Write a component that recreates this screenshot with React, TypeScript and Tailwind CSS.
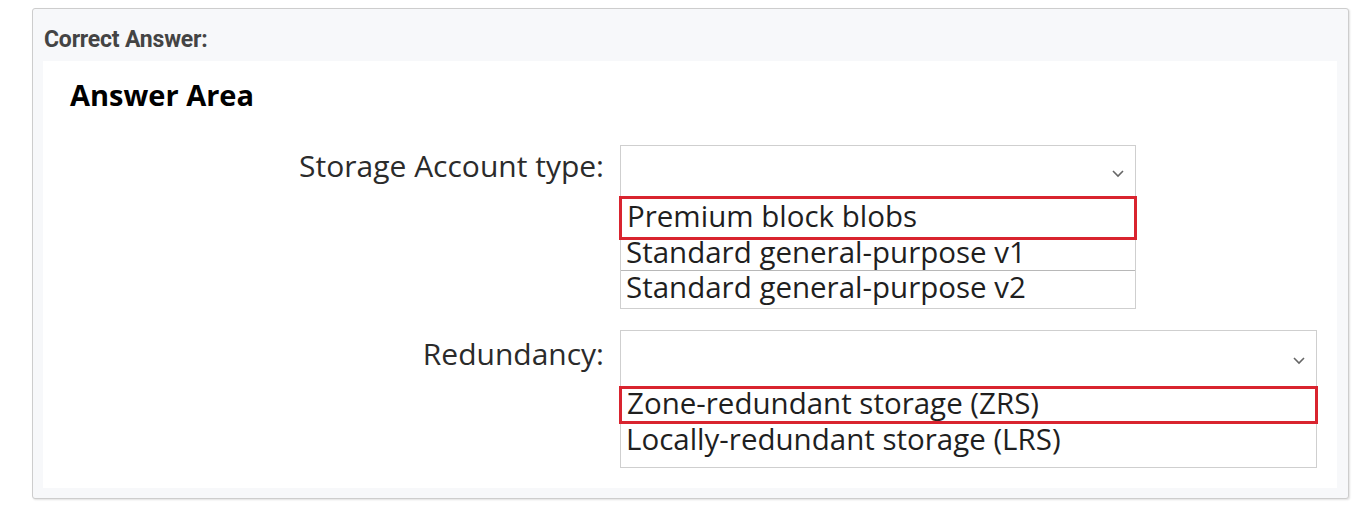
function Chevron() {
  return (
    <svg width="14" height="9" viewBox="0 0 14 9" className="text-[#666]">
      <path d="M2 2 L7 7 L12 2" fill="none" stroke="currentColor" strokeWidth="1.6" />
    </svg>
  );
}

type Option = { text: string; row: string; nudge: string; marked?: boolean; divider?: boolean };

function Dropdown({ width, headerH, options }: { width: string; headerH: string; options: Option[] }) {
  return (
    <div className={`${width} border border-[#cfcfcf] bg-white`}>
      <div className={`${headerH} flex items-center justify-end pr-[10px] pt-[4px]`}>
        <Chevron />
      </div>
      {options.map((o) => (
        <div
          key={o.text}
          className={`${o.row} flow-root pl-[5px] text-[29.5px] leading-none text-[#1f1f1f] ${
            o.marked ? "-mx-[2px] border-[3px] border-[#d9242f]" : ""
          } ${o.divider ? "border-t border-[#b8b8b8]" : ""}`}
        >
          <span className={`block whitespace-nowrap ${o.nudge}`}>{o.text}</span>
        </div>
      ))}
    </div>
  );
}

export default function App() {
  return (
    <div className="bg-white w-[1369px] h-[531px] pl-[32px] pt-[8px]" style={{ fontFamily: "'Open Sans', 'Noto Sans', sans-serif" }}>
      <div className="w-[1317px] h-[491px] rounded-[3px] border border-[#cdcdcd] bg-[#f7f8fa] shadow-[1px_1px_2px_rgba(0,0,0,0.12)] pl-[10px] pr-[11px] flex flex-col">
        <div
          className="h-[52px] flex items-center pl-[1px] pt-[10px] text-[23px] font-bold text-[#444] tracking-[-0.2px]"
          style={{ fontFamily: "Roboto, 'Liberation Sans', sans-serif" }}
        >
          Correct Answer:
        </div>
        <div className="flex-1 mb-[10px] bg-white pt-[15px]">
          <h2 className="pl-[27px] text-[29px] font-bold text-black leading-[38px]">Answer Area</h2>
          <div className="mt-[31px] flex gap-[16px]">
            <div className="w-[561px] h-[40px] flex items-center justify-end text-[30px] text-[#2b2b2b]">
              Storage Account type:
            </div>
            <Dropdown
              width="w-[516px]"
              headerH="h-[50px]"
              options={[
                { text: "Premium block blobs", row: "h-[44px] pt-[2px]", nudge: "", marked: true },
                { text: "Standard general-purpose v1", row: "h-[30px]", nudge: "-mt-[3px]" },
                { text: "Standard general-purpose v2", row: "h-[38px] pt-[1px]", nudge: "", divider: true },
              ]}
            />
          </div>
          <div className="mt-[21px] flex gap-[16px]">
            <div className="w-[561px] h-[47px] flex items-center justify-end text-[30px] text-[#2b2b2b]">
              Redundancy:
            </div>
            <Dropdown
              width="w-[697px]"
              headerH="h-[55px]"
              options={[
                { text: "Zone-redundant storage (ZRS)", row: "h-[38px]", nudge: "-mt-[1px]", marked: true },
                { text: "Locally-redundant storage (LRS)", row: "h-[43px]", nudge: "" },
              ]}
            />
          </div>
        </div>
      </div>
    </div>
  );
}
